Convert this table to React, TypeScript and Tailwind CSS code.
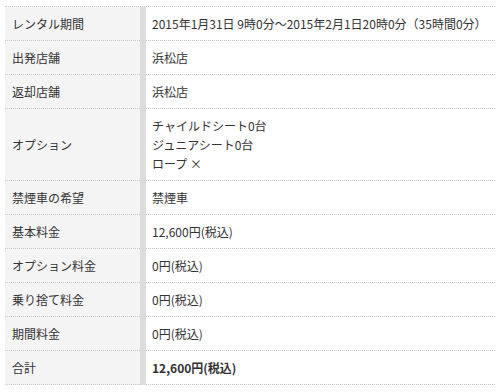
const rows: { label: string; value: string[]; bold?: boolean }[] = [
  {
    label: "レンタル期間",
    value: ["2015年1月31日 9時0分～2015年2月1日20時0分（35時間0分）"],
  },
  { label: "出発店舗", value: ["浜松店"] },
  { label: "返却店舗", value: ["浜松店"] },
  {
    label: "オプション",
    value: ["チャイルドシート0台", "ジュニアシート0台", "ロープ ×"],
  },
  { label: "禁煙車の希望", value: ["禁煙車"] },
  { label: "基本料金", value: ["12,600円(税込)"] },
  { label: "オプション料金", value: ["0円(税込)"] },
  { label: "乗り捨て料金", value: ["0円(税込)"] },
  { label: "期間料金", value: ["0円(税込)"] },
  { label: "合計", value: ["12,600円(税込)"], bold: true },
];

const App = () => {
  return (
    <div className="min-h-screen bg-white pt-[6px] pl-[5px] font-['Noto_Sans_CJK_JP','Noto_Sans',sans-serif] text-[12px] leading-[19px] text-[#333]">
      <div className="w-[490px] border-t border-dotted border-[#c8c8c8]">
        {rows.map((row) => (
          <div key={row.label} className="flex">
            <div className="flex w-[135px] shrink-0 items-center border-b border-dotted border-[#c8c8c8] bg-[#f4f4f4] px-[7px] py-[7px]">
              {row.label}
            </div>
            <div className="w-[6px] shrink-0 bg-[#dcdcdc]" />
            <div
              className={`flex flex-1 flex-col justify-center border-b border-dotted border-[#c8c8c8] px-[6px] py-[7px] ${
                row.bold ? "font-bold" : ""
              }`}
            >
              {row.value.map((line) => (
                <div key={line}>{line}</div>
              ))}
            </div>
          </div>
        ))}
      </div>
    </div>
  );
};

export default App;
